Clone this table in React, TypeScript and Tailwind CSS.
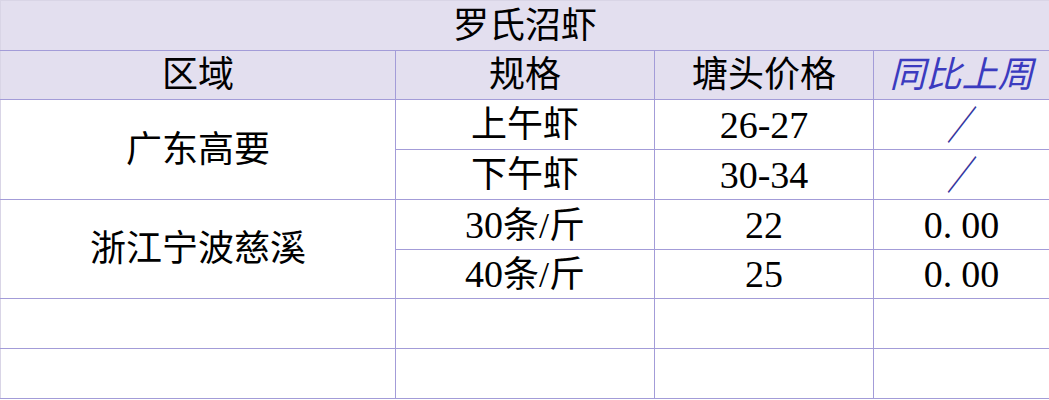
import React from "react";

const font = { fontFamily: '"Liberation Serif", "Noto Sans CJK SC", serif' };

function Zero() {
  return (
    <span>
      0<span className="mr-[9px]">.</span>00
    </span>
  );
}

function Slash() {
  return (
    <span className="inline-block scale-y-[1.1] scale-x-[0.85] text-[#35359e] translate-y-[2px] font-medium">／</span>
  );
}

export default function App() {
  const cell = "border border-[#a39cd8] text-center align-middle p-0";
  const num = "text-[38px]";
  return (
    <div className="w-[1049px] h-[400px] bg-white overflow-hidden" style={font}>
      <table className="table-fixed border-collapse w-[1049px] text-[36px] leading-none text-black">
        <colgroup>
          <col className="w-[395px]" />
          <col className="w-[259px]" />
          <col className="w-[219px]" />
          <col className="w-[176px]" />
        </colgroup>
        <tbody>
          <tr className="h-[50px] bg-[#e3dfef]">
            <td colSpan={4} className="border-t border-l border-t-[#d9d5e6] border-l-[#d9d5e6] border-r border-r-[#a39cd8] border-b border-b-[#a39cd8] text-center align-middle p-0">
              罗氏沼虾
            </td>
          </tr>
          <tr className="h-[49px] bg-[#e3dfef]">
            <td className={`${cell} border-l-[#d9d5e6]`}>区域</td>
            <td className={cell}>规格</td>
            <td className={cell}>塘头价格</td>
            <td className={`${cell} italic text-[#3b3bbf]`}>同比上周</td>
          </tr>
          <tr className="h-[50px]">
            <td rowSpan={2} className={`${cell} border-l-[#d9d5e6]`}>广东高要</td>
            <td className={cell}>上午虾</td>
            <td className={`${cell} ${num}`}>26-27</td>
            <td className={cell}><Slash /></td>
          </tr>
          <tr className="h-[50px]">
            <td className={cell}>下午虾</td>
            <td className={`${cell} ${num}`}>30-34</td>
            <td className={cell}><Slash /></td>
          </tr>
          <tr className="h-[50px]">
            <td rowSpan={2} className={`${cell} border-l-[#d9d5e6]`}>浙江宁波慈溪</td>
            <td className={cell}><span className={num}>30</span>条/斤</td>
            <td className={`${cell} ${num}`}>22</td>
            <td className={`${cell} ${num}`}><Zero /></td>
          </tr>
          <tr className="h-[49px]">
            <td className={cell}><span className={num}>40</span>条/斤</td>
            <td className={`${cell} ${num}`}>25</td>
            <td className={`${cell} ${num}`}><Zero /></td>
          </tr>
          <tr className="h-[50px]">
            <td className={`${cell} border-l-[#d9d5e6]`}></td>
            <td className={cell}></td>
            <td className={cell}></td>
            <td className={cell}></td>
          </tr>
          <tr className="h-[50px]">
            <td className={`${cell} border-l-[#d9d5e6]`}></td>
            <td className={cell}></td>
            <td className={cell}></td>
            <td className={cell}></td>
          </tr>
        </tbody>
      </table>
    </div>
  );
}
